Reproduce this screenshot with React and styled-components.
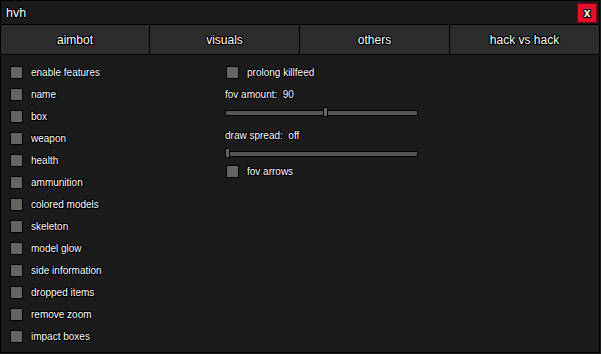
import React from "react";
import styled, { createGlobalStyle } from "styled-components";

const Global = createGlobalStyle`
  html, body { margin: 0; padding: 0; background: #1c1c1c; }
  body { font-family: "Liberation Sans", Arial, sans-serif; }
  * { box-sizing: border-box; }
`;

const outline = `
  text-shadow: 1px 0 0 #000, -1px 0 0 #000, 0 1px 0 #000, 0 -1px 0 #000,
    1px 1px 0 #000, -1px -1px 0 #000, 1px -1px 0 #000, -1px 1px 0 #000;
`;

const Window = styled.div`
  width: 600px;
  height: 353px;
  border: 1px solid #000;
  background: #1b1b1b;
  display: flex;
  flex-direction: column;
  color: #fff;
`;

const TitleBar = styled.div`
  height: 24px;
  border-bottom: 1px solid #000;
  background: #1b1b1b;
  display: flex;
  align-items: center;
  justify-content: space-between;
  padding: 0 2px 0 5px;
`;

const Title = styled.span`
  font-size: 12.5px;
  ${outline}
`;

const CloseButton = styled.div`
  width: 20px;
  height: 20px;
  background: #e6102c;
  border: 1px solid #7a0010;
  display: flex;
  align-items: center;
  justify-content: center;
  font-size: 12px;
  font-weight: bold;
  ${outline}
`;

const Tabs = styled.div`
  height: 30px;
  display: grid;
  grid-template-columns: 148px 150px 150px 150px;
  border-bottom: 1px solid #000;
`;

const Tab = styled.div`
  background: #2c2c2c;
  display: flex;
  align-items: center;
  justify-content: center;
  font-size: 12px;
  border-left: ${(p) => (p.$first ? "none" : "1px solid #000")};
  ${outline}
`;

const Content = styled.div`
  flex: 1;
  display: grid;
  grid-template-columns: 215px 193px;
  padding: 6px 0 0 9px;
  background: #1b1b1b;
`;

const Column = styled.div`
  display: flex;
  flex-direction: column;
`;

const CheckRow = styled.div`
  height: 22px;
  display: flex;
  align-items: center;
  gap: 8px;
  padding-left: ${(p) => p.$indent || 0}px;
  font-size: 10px;
  ${outline}
`;

const Box = styled.span`
  width: 13px;
  height: 13px;
  flex: none;
  background: #656565;
  border: 1px solid #000;
`;

const Label = styled.div`
  height: 22px;
  display: flex;
  align-items: center;
  font-size: 10px;
  white-space: pre;
  ${outline}
`;

const SliderRow = styled.div`
  height: ${(p) => p.$h}px;
  padding-top: 2px;
`;

const Track = styled.div`
  position: relative;
  width: 193px;
  height: 10px;
  &::before {
    content: "";
    position: absolute;
    left: 0;
    right: 0;
    top: 3px;
    height: 4px;
    background: #555;
    border: 1px solid #000;
  }
`;

const Thumb = styled.div`
  position: absolute;
  top: 0;
  width: 5px;
  height: 10px;
  background: #666;
  border: 1px solid #000;
`;

const Slider = ({ value, min, max, h }) => {
  const left = ((value - min) / (max - min)) * (193 - 5);
  return (
    <SliderRow $h={h}>
      <Track>
        <Thumb style={{ left: `${left}px` }} />
      </Track>
    </SliderRow>
  );
};

const leftItems = [
  "enable features",
  "name",
  "box",
  "weapon",
  "health",
  "ammunition",
  "colored models",
  "skeleton",
  "model glow",
  "side information",
  "dropped items",
  "remove zoom",
  "impact boxes",
];

export default function App() {
  return (
    <>
      <Global />
      <Window>
        <TitleBar>
          <Title>hvh</Title>
          <CloseButton>x</CloseButton>
        </TitleBar>
        <Tabs>
          <Tab $first>aimbot</Tab>
          <Tab>visuals</Tab>
          <Tab>others</Tab>
          <Tab>hack vs hack</Tab>
        </Tabs>
        <Content>
          <Column>
            {leftItems.map((t) => (
              <CheckRow key={t}>
                <Box />
                {t}
              </CheckRow>
            ))}
          </Column>
          <Column>
            <CheckRow $indent={1}>
              <Box />
              prolong killfeed
            </CheckRow>
            <Label>fov amount:  90</Label>
            <Slider value={90} min={0} max={173} h={19} />
            <Label>draw spread:  off</Label>
            <Slider value={0} min={0} max={100} h={14} />
            <CheckRow $indent={1}>
              <Box />
              fov arrows
            </CheckRow>
          </Column>
        </Content>
      </Window>
    </>
  );
}
